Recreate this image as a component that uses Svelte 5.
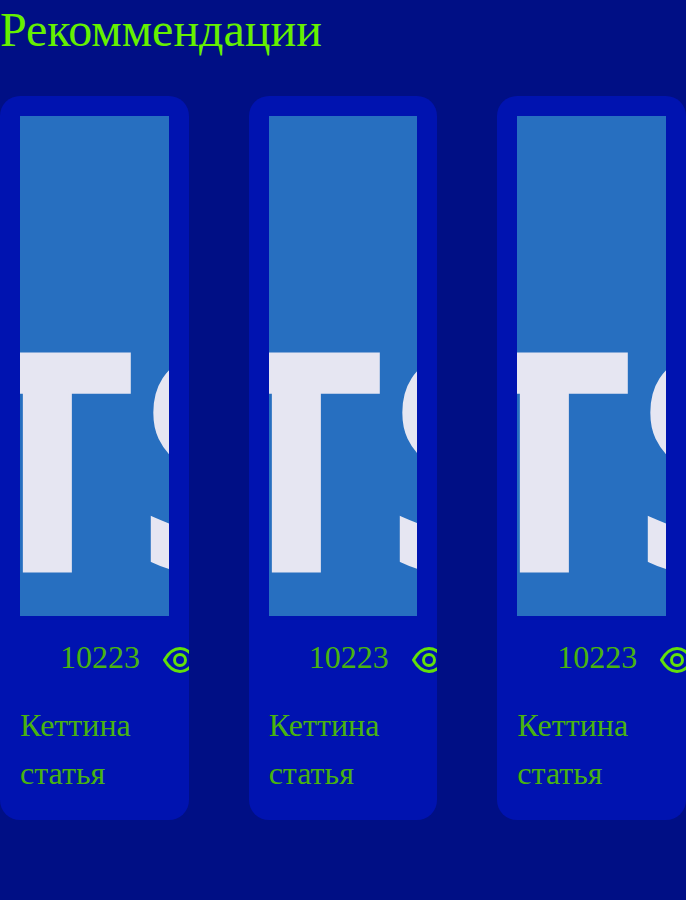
<script>
  const articles = [
    { id: 1, views: 10223, title: 'Кеттина статья' },
    { id: 2, views: 10223, title: 'Кеттина статья' },
    { id: 3, views: 10223, title: 'Кеттина статья' }
  ];
</script>

<main>
  <h2>Рекоммендации</h2>
  <div class="list">
    {#each articles as article (article.id)}
      <article class="card">
        <svg class="cover" viewBox="0 0 500 500" preserveAspectRatio="xMidYMid slice" role="img" aria-label="TypeScript">
          <rect width="500" height="500" fill="#276fc0" />
          <text y="455" font-size="304" font-weight="700" fill="#e6e6f2" stroke="#e6e6f2" stroke-width="3"><tspan x="115">T</tspan><tspan x="294">S</tspan></text>
        </svg>
        <div class="info">
          <span class="views">{article.views}</span>
          <svg class="eye" viewBox="0 0 34 26" aria-hidden="true">
            <path d="M1.5 13C5.5 6 10.5 1.5 17 1.5S28.5 6 32.5 13C28.5 20 23.5 24.5 17 24.5S5.5 20 1.5 13Z" />
            <circle cx="17" cy="13" r="5.5" />
          </svg>
        </div>
        <p class="title">{article.title}</p>
      </article>
    {/each}
  </div>
</main>

<style>
  :global(body) {
    background: #000f85;
  }

  main {
    font-family: 'Liberation Serif', 'Times New Roman', serif;
  }

  h2 {
    margin: 0;
    color: #66f000;
    font-size: 48px;
    font-weight: 400;
    line-height: 60px;
  }

  .list {
    display: grid;
    grid-template-columns: repeat(3, minmax(0, 1fr));
    gap: 60px;
    padding-top: 36px;
  }

  .card {
    overflow: hidden;
    padding: 20px 20px 23px;
    border-radius: 20px;
    background: #0013b0;
    color: #49b30f;
    font-size: 32px;
    line-height: 48px;
  }

  .cover {
    display: block;
    width: 100%;
    height: 500px;
    font-family: 'Open Sans', 'Noto Sans', sans-serif;
  }

  .info {
    display: flex;
    align-items: center;
    gap: 23px;
    margin-top: 17px;
    padding-left: 40px;
  }

  .eye {
    flex: none;
    width: 34px;
    height: 26px;
    margin-top: 6px;
    fill: none;
    stroke: #62e00a;
    stroke-width: 3;
    stroke-linejoin: round;
  }

  .title {
    margin: 20px 0 0;
  }
</style>
